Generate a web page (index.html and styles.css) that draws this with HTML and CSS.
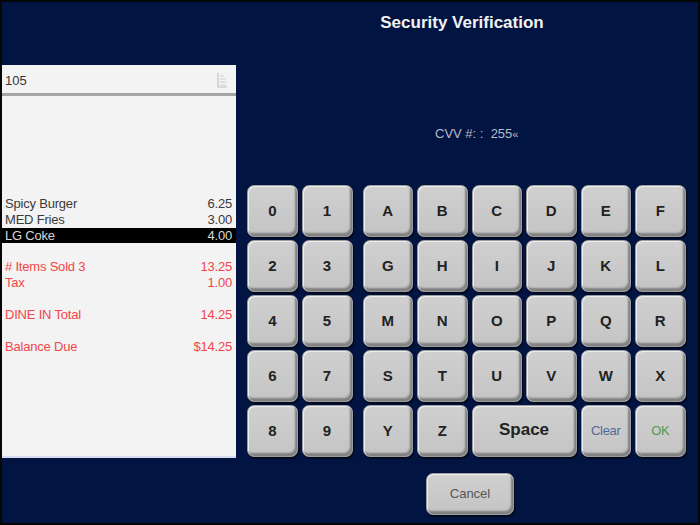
FILE: index.html
```html
<!DOCTYPE html>
<html>
<head>
<meta charset="utf-8">
<link rel="stylesheet" href="styles.css">
</head>
<body>
<div class="frame">
  <div class="left">
    <div class="panel">
      <div class="panel-head">
        <span class="check-no">105</span>
        <svg class="head-icon" width="12" height="16" viewBox="0 0 12 16">
          <path d="M2 1 V15 H11" fill="none" stroke="#c4c4c4" stroke-width="1.2"/>
          <path d="M4 4 H8 M4 7 H10 M4 10 H10 M4 13 H10" fill="none" stroke="#cfcfcf" stroke-width="1.2"/>
        </svg>
      </div>
      <div class="panel-body">
        <div class="items">
          <div class="line"><span>Spicy Burger</span><span>6.25</span></div>
          <div class="line"><span>MED Fries</span><span>3.00</span></div>
          <div class="line selected"><span>LG Coke</span><span>4.00</span></div>
        </div>
        <div class="summary">
          <div class="line blank"></div>
          <div class="line red"><span># Items Sold 3</span><span>13.25</span></div>
          <div class="line red"><span>Tax</span><span>1.00</span></div>
          <div class="line blank"></div>
          <div class="line red"><span>DINE IN Total</span><span>14.25</span></div>
          <div class="line blank"></div>
          <div class="line red"><span>Balance Due</span><span>$14.25</span></div>
        </div>
      </div>
    </div>
  </div>
  <div class="right">
    <div class="title">Security Verification</div>
    <div class="cvv">CVV #: :&nbsp; 255<span class="cursor">«</span></div>
    <div class="keypad">
      <div class="numgrid">
        <div class="key">0</div><div class="key">1</div>
        <div class="key">2</div><div class="key">3</div>
        <div class="key">4</div><div class="key">5</div>
        <div class="key">6</div><div class="key">7</div>
        <div class="key">8</div><div class="key">9</div>
      </div>
      <div class="lettergrid">
        <div class="key">A</div><div class="key">B</div><div class="key">C</div><div class="key">D</div><div class="key">E</div><div class="key">F</div>
        <div class="key">G</div><div class="key">H</div><div class="key">I</div><div class="key">J</div><div class="key">K</div><div class="key">L</div>
        <div class="key">M</div><div class="key">N</div><div class="key">O</div><div class="key">P</div><div class="key">Q</div><div class="key">R</div>
        <div class="key">S</div><div class="key">T</div><div class="key">U</div><div class="key">V</div><div class="key">W</div><div class="key">X</div>
        <div class="key">Y</div><div class="key">Z</div><div class="key space">Space</div><div class="key clear">Clear</div><div class="key ok">OK</div>
      </div>
    </div>
    <div class="key cancel">Cancel</div>
  </div>
</div>
</body>
</html>
```
FILE: styles.css
```css
* { box-sizing: border-box; }
html, body { margin: 0; padding: 0; }
body {
  font-family: "Liberation Sans", Arial, sans-serif;
  background: #000;
}
.frame {
  width: 700px;
  height: 525px;
  border: 2px solid #060606;
  background: #021442;
  display: flex;
}
.left {
  width: 234px;
  padding-top: 63px;
}
.panel {
  width: 234px;
  height: 393px;
  background: #f3f3f3;
  border-bottom: 2px solid #d8dcf0;
  display: flex;
  flex-direction: column;
}
.panel-head {
  height: 31px;
  border-bottom: 3px solid #a4a4a4;
  display: flex;
  align-items: center;
  justify-content: space-between;
  padding: 2px 8px 0 3px;
  font-size: 13px;
  color: #333;
}
.head-icon { display: block; }
.panel-body {
  flex: 1;
  display: flex;
  flex-direction: column;
}
.items {
  height: 147px;
  display: flex;
  flex-direction: column;
  justify-content: flex-end;
}
.line {
  height: 16px;
  line-height: 16px;
  font-size: 13px;
  letter-spacing: -0.2px;
  color: #3a3a3a;
  display: flex;
  justify-content: space-between;
  padding: 0 4px 0 3px;
}
.line.selected {
  background: #000;
  color: #d8d8d8;
  height: 15px;
  line-height: 15px;
}
.line.red { color: #f2464a; }
.right {
  flex: 1;
  display: flex;
  flex-direction: column;
}
.title {
  margin-top: 10px;
  margin-right: 10px;
  text-align: center;
  font-size: 17px;
  line-height: 21px;
  font-weight: bold;
  color: #f2f2f2;
}
.cvv {
  margin-top: 93px;
  padding-left: 199px;
  font-size: 13px;
  line-height: 16px;
  color: #b4bccb;
}
.cursor { font-size: 11px; }
.keypad {
  margin-top: 43px;
  margin-left: 11px;
  display: flex;
  gap: 10px;
}
.numgrid {
  display: grid;
  grid-template-columns: 51px 51px;
  grid-auto-rows: 52px;
  column-gap: 3.5px;
  row-gap: 3px;
}
.lettergrid {
  display: grid;
  grid-template-columns: repeat(6, 50.5px);
  grid-auto-rows: 52px;
  column-gap: 4px;
  row-gap: 3px;
}
.key {
  background: linear-gradient(#d0d0d0, #c4c4c4);
  border-radius: 7px;
  border: 1px solid #9c9c9c;
  box-shadow: inset 1px 1px 0 #efefef, inset -2px -3px 2px #808080, 1px 2px 1px rgba(0,0,0,0.55);
  display: flex;
  align-items: center;
  justify-content: center;
  font-size: 15px;
  font-weight: bold;
  color: #222;
  padding-bottom: 2px;
}
.key.space { grid-column: span 2; font-size: 17px; }
.key.clear { font-weight: normal; font-size: 13px; color: #4d6a9a; letter-spacing: -0.3px; }
.key.ok { font-weight: normal; font-size: 13px; color: #4f9a52; letter-spacing: -0.5px; }
.key.cancel {
  margin-top: 16px;
  margin-left: 190px;
  width: 88px;
  height: 42px;
  font-weight: normal;
  font-size: 13px;
  color: #555;
}
```
